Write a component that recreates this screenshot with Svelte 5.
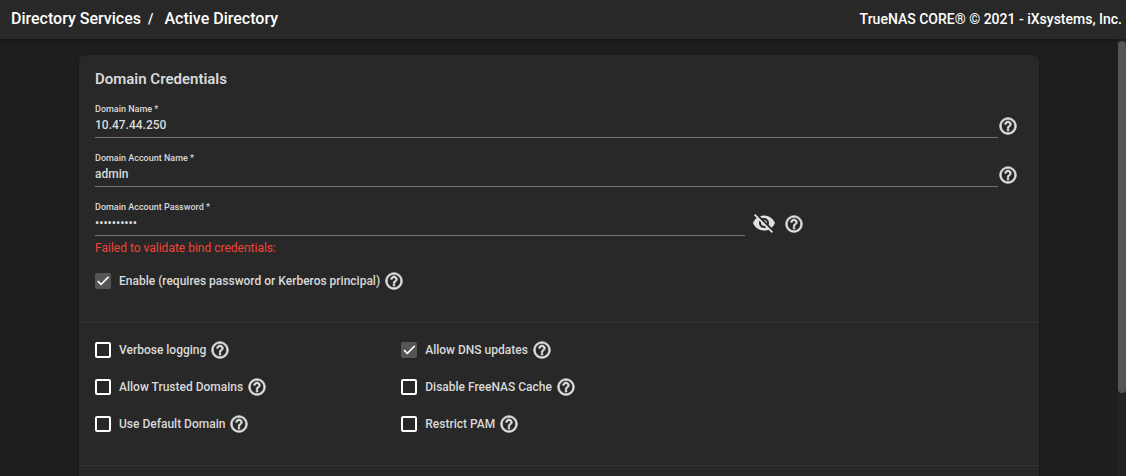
<script>
  let domain = $state('10.47.44.250');
  let account = $state('admin');
  let password = $state('abcdefghij');
  let showPassword = $state(false);
  let enable = $state(true);
  let options = $state([
    { label: 'Verbose logging', checked: false },
    { label: 'Allow DNS updates', checked: true },
    { label: 'Allow Trusted Domains', checked: false },
    { label: 'Disable FreeNAS Cache', checked: false },
    { label: 'Use Default Domain', checked: false },
    { label: 'Restrict PAM', checked: false }
  ]);
</script>

{#snippet help()}
  <button type="button" class="icon-button help" aria-label="Help">
    <svg viewBox="0 0 24 24" aria-hidden="true"><path d="M11 18h2v-2h-2v2zm1-16C6.48 2 2 6.48 2 12s4.48 10 10 10 10-4.48 10-10S17.52 2 12 2zm0 18c-4.41 0-8-3.59-8-8s3.59-8 8-8 8 3.59 8 8-3.59 8-8 8zm0-14c-2.21 0-4 1.79-4 4h2c0-1.1.9-2 2-2s2 .9 2 2c0 2-3 1.75-3 5h2c0-2.25 3-2.5 3-5 0-2.21-1.79-4-4-4z" /></svg>
  </button>
{/snippet}

<div class="page">
  <header>
    <nav>
      <a href="#directory">Directory Services</a>
      <span class="slash">/</span>
      <a href="#active">Active Directory</a>
    </nav>
    <span class="copyright">TrueNAS CORE® © 2021 - iXsystems, Inc.</span>
  </header>

  <div class="body">
    <main>
      <form class="card">
        <section class="credentials">
          <h1>Domain Credentials</h1>
          <div class="row">
            <div class="field">
              <label for="domain">Domain Name *</label>
              <input id="domain" type="text" bind:value={domain} />
            </div>
            {@render help()}
          </div>
          <div class="row">
            <div class="field">
              <label for="account">Domain Account Name *</label>
              <input id="account" type="text" bind:value={account} />
            </div>
            {@render help()}
          </div>
          <div class="row password">
            <div class="field">
              <label for="password">Domain Account Password *</label>
              <input id="password" type={showPassword ? 'text' : 'password'} bind:value={password} />
            </div>
            <button type="button" class="icon-button eye" aria-label="Toggle password visibility" onclick={() => (showPassword = !showPassword)}>
              <svg viewBox="0 0 24 24" aria-hidden="true"><path d="M12 7c2.76 0 5 2.24 5 5 0 .65-.13 1.26-.36 1.83l2.92 2.92c1.51-1.26 2.7-2.89 3.43-4.75-1.73-4.39-6-7.5-11-7.5-1.4 0-2.74.25-3.98.7l2.16 2.16C10.74 7.13 11.35 7 12 7zM2 4.27l2.28 2.28.46.46C3.08 8.3 1.78 10.02 1 12c1.73 4.39 6 7.5 11 7.5 1.55 0 3.03-.3 4.38-.84l.42.42L19.73 22 21 20.73 3.27 3 2 4.27zM7.53 9.8l1.55 1.55c-.05.21-.08.43-.08.65 0 1.66 1.34 3 3 3 .22 0 .44-.03.65-.08l1.55 1.55c-.67.33-1.41.53-2.2.53-2.76 0-5-2.24-5-5 0-.79.2-1.53.53-2.2zm4.31-.78l3.15 3.15.02-.16c0-1.66-1.34-3-3-3l-.17.01z" /></svg>
            </button>
            {@render help()}
          </div>
          <p class="error">Failed to validate bind credentials:</p>
          <div class="check">
            <label><input type="checkbox" bind:checked={enable} />Enable (requires password or Kerberos principal)</label>
            {@render help()}
          </div>
        </section>

        <section class="options">
          {#each options as option}
            <div class="check">
              <label><input type="checkbox" bind:checked={option.checked} />{option.label}</label>
              {@render help()}
            </div>
          {/each}
        </section>

        <section class="more"></section>
      </form>
    </main>
    <div class="track"><div class="thumb"></div></div>
  </div>
</div>

<style>
  :global(body) {
    margin: 0;
    background: #1e1e1e;
  }
  .page {
    display: flex;
    flex-direction: column;
    height: 100vh;
    overflow: hidden;
    font-family: Roboto, sans-serif;
    font-size: 12px;
    font-weight: 500;
    color: #d9d9d9;
    background: #1e1e1e;
  }
  header {
    display: flex;
    flex: none;
    justify-content: space-between;
    align-items: center;
    box-sizing: border-box;
    height: 39px;
    padding: 0 4px 2px 11px;
    background: #282828;
    box-shadow: 0 1px 3px rgba(0, 0, 0, 0.4);
    color: #fff;
    z-index: 1;
  }
  nav {
    display: flex;
    align-items: center;
    font-size: 16px;
  }
  nav a {
    color: inherit;
    text-decoration: none;
  }
  .slash {
    margin: 0 11px 0 7px;
    font-size: 14px;
  }
  .copyright {
    font-size: 14px;
  }
  .body {
    display: flex;
    flex: 1;
    min-height: 0;
  }
  main {
    flex: 1;
    min-width: 0;
    padding: 16px;
    overflow: hidden;
  }
  .track {
    flex: none;
    width: 8px;
    padding-top: 2px;
    background: #242424;
  }
  .thumb {
    height: 81%;
    border-radius: 4px;
    background: #555;
  }
  .card {
    max-width: 960px;
    margin: 0 auto;
    border-radius: 6px;
    background: #282828;
    box-shadow: 0 1px 3px rgba(0, 0, 0, 0.2);
  }
  .credentials {
    padding: 16px 16px 31px;
  }
  h1 {
    margin: 0 0 15px;
    font-size: 15px;
    font-weight: 600;
    line-height: 16px;
  }
  .row {
    display: flex;
    align-items: flex-end;
    padding-right: 5px;
    margin-bottom: 13px;
  }
  .field {
    display: flex;
    flex: 1;
    flex-direction: column;
    min-width: 0;
  }
  .field label {
    font-size: 9px;
    line-height: 14px;
  }
  .field input {
    box-sizing: border-box;
    width: 100%;
    height: 22px;
    padding: 0 0 4px;
    border: 0;
    border-bottom: 1px solid #747474;
    border-radius: 0;
    outline: 0;
    background: transparent;
    color: inherit;
    font: inherit;
  }
  .password {
    padding-right: 0;
    margin-bottom: 4px;
  }
  .password .field {
    flex: 0 0 70%;
  }
  .icon-button {
    flex: none;
    display: block;
    padding: 0;
    border: 0;
    background: none;
    color: #e0e0e0;
    cursor: pointer;
  }
  .icon-button svg {
    display: block;
    width: 100%;
    height: 100%;
    fill: currentColor;
  }
  .help {
    width: 20px;
    height: 20px;
  }
  .help svg {
    stroke: currentColor;
    stroke-width: 0.8;
  }
  .row .help {
    margin-bottom: 2px;
  }
  .eye {
    width: 24px;
    height: 24px;
    margin: 0 8px 1px 7px;
  }
  .error {
    margin: 0 0 15px;
    color: #f44336;
    font-weight: 400;
    line-height: 16px;
  }
  .check {
    display: flex;
    align-items: center;
    gap: 4px;
    height: 20px;
  }
  .check label {
    display: flex;
    align-items: center;
    gap: 8px;
  }
  .check input {
    appearance: none;
    box-sizing: border-box;
    width: 16px;
    height: 16px;
    margin: 0;
    border: 2px solid #fff;
    border-radius: 2px;
  }
  .check input:checked {
    display: grid;
    place-items: center;
    border: 0;
    background: #555;
  }
  .check input:checked::before {
    content: '';
    width: 100%;
    height: 100%;
    background: #fff;
    clip-path: polygon(14% 54%, 21% 47%, 38% 64%, 81% 21%, 88% 28%, 38% 78%);
  }
  .options {
    display: grid;
    grid-template-columns: 33% 33%;
    row-gap: 17px;
    padding: 17px 16px 31px;
    border-top: 1px solid #333;
  }
  .more {
    min-height: 120px;
    border-top: 1px solid #333;
  }
</style>
